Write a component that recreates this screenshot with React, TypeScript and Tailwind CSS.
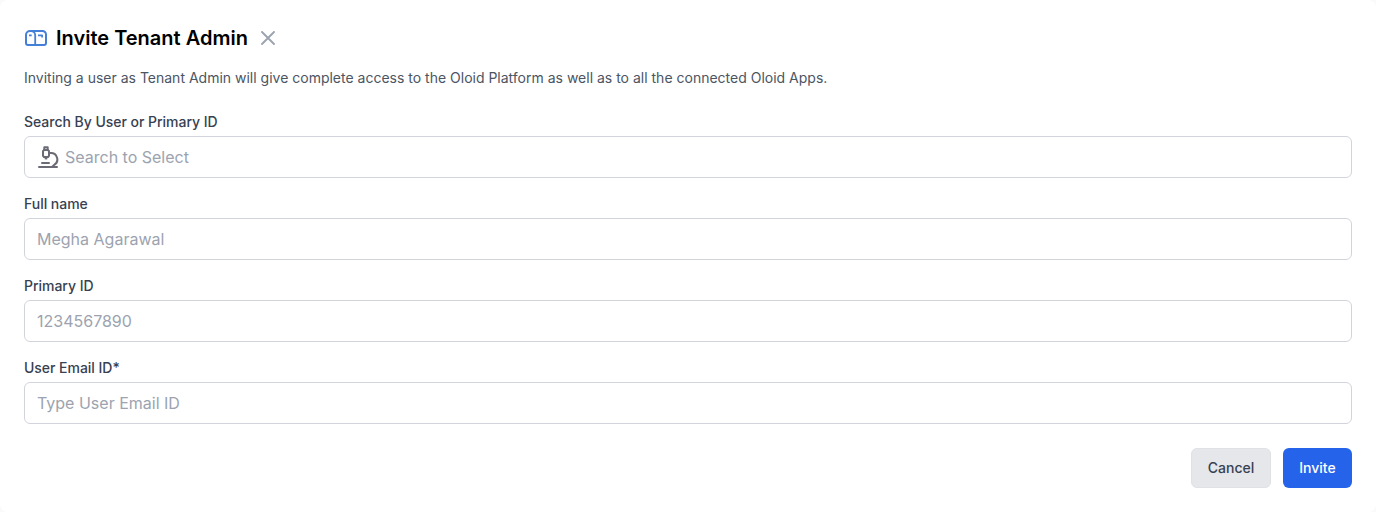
import React from "react";

function MailboxIcon() {
  return (
    <svg className="h-6 w-6 shrink-0 text-[#4480d8]" viewBox="0 0 24 24" fill="none" stroke="currentColor" strokeWidth="2" strokeLinecap="round" strokeLinejoin="round">
      <path d="M6 5H18.5a3.5 3.5 0 0 1 3.5 3.5V17a2 2 0 0 1-2 2H4a2 2 0 0 1-2-2V9A4 4 0 0 1 6 5Z" />
      <path strokeWidth="1.8" d="M7 5a4.2 4.2 0 0 1 4.2 4.2V19" />
      <path strokeWidth="1.7" strokeLinecap="butt" d="M5 9.3h2.7M14 9.3h4.1v2.2" />
    </svg>
  );
}

function MicroscopeIcon() {
  return (
    <svg className="h-6 w-6 shrink-0 text-[#6b6b76]" viewBox="0 0 24 24" fill="none" stroke="currentColor" strokeWidth="2" strokeLinecap="round" strokeLinejoin="round">
      <path d="M4 22h18" />
      <path d="M7 18h7" />
      <path d="M9.3 4.6V2.2h3.4v2.4" />
      <path d="M8 6.2 9 5h4l1 1.2v4.6L13 12H9l-1-1.2Z" />
      <path strokeWidth="2.6" strokeLinecap="butt" d="M11 12v2.4" />
      <path d="M14.5 8h1a6.5 6.5 0 0 1 3.4 12.2L17.5 21.5" />
    </svg>
  );
}

interface FieldProps {
  label: string;
  placeholder: string;
  icon?: React.ReactNode;
}

function Field({ label, placeholder, icon }: FieldProps) {
  return (
    <label className="flex flex-col gap-1">
      <span className="text-sm leading-5 font-medium tracking-[-0.03px] text-[#374151]">{label}</span>
      <span className="flex h-[42px] items-center rounded-md border border-[#d1d5db] bg-white px-3">
        {icon && <span className="-ml-0.5 mr-1.5 flex">{icon}</span>}
        <input className="min-w-0 flex-1 bg-transparent text-base text-[#374151] outline-none placeholder:text-[#9ca3af]" placeholder={placeholder} />
      </span>
    </label>
  );
}

export default function App() {
  return (
    <div className="h-[512px] bg-[#fafafa] font-['Inter',sans-serif]">
      <form className="flex h-full flex-col rounded-lg bg-white p-6" onSubmit={(e) => e.preventDefault()}>
        <header className="flex h-7 items-center">
          <MailboxIcon />
          <h1 className="ml-2 text-xl leading-7 font-semibold text-black">Invite Tenant Admin</h1>
          <button type="button" aria-label="Close" className="ml-2 flex text-[#9ca3af]">
            <svg className="h-6 w-6" viewBox="0 0 24 24" fill="none" stroke="currentColor" strokeWidth="1.9" strokeLinecap="round">
              <path d="M6 6l12 12M18 6L6 18" />
            </svg>
          </button>
        </header>
        <p className="mt-4 text-sm leading-5 text-[#4b5563]">
          Inviting a user as Tenant Admin will give complete access to the Oloid Platform as well as to all the connected Oloid Apps.
        </p>
        <div className="mt-6 flex flex-col gap-4">
          <Field label="Search By User or Primary ID" placeholder="Search to Select" icon={<MicroscopeIcon />} />
          <Field label="Full name" placeholder="Megha Agarawal" />
          <Field label="Primary ID" placeholder="1234567890" />
          <Field label="User Email ID*" placeholder="Type User Email ID" />
        </div>
        <footer className="mt-6 flex justify-end gap-3">
          <button type="button" className="h-10 w-20 rounded-md border border-[#dfe1e5] bg-[#e5e7eb] text-sm font-medium text-[#374151]">Cancel</button>
          <button type="submit" className="h-10 w-[69px] rounded-md bg-[#2563eb] text-sm font-medium text-white">Invite</button>
        </footer>
      </form>
    </div>
  );
}
